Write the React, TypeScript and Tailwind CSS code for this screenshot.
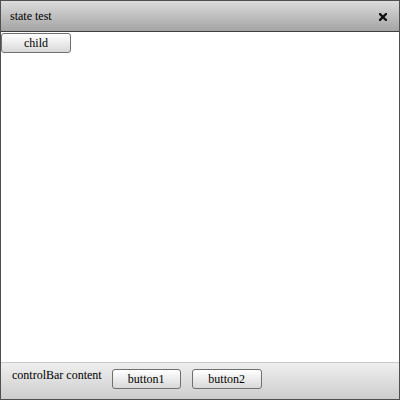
export default function App() {
  const serif = 'font-["Liberation_Serif",serif]';
  const btn =
    'h-[20px] rounded-[3px] border border-[#6f6f6f] bg-gradient-to-b from-[#ffffff] to-[#d9d9d9] text-[12px] leading-none text-black flex items-center justify-center ' +
    serif;

  return (
    <div className={'w-[400px] h-[400px] border border-[#4f4f4f] flex flex-col bg-white text-black ' + serif}>
      <div className="h-[31px] shrink-0 border-b border-[#3f3f3f] bg-gradient-to-b from-[#dcdcdc] to-[#a4a4a4] flex items-center justify-between pl-[9px] pr-[12px]">
        <span className={'text-[12px] leading-none ' + serif}>state test</span>
        <svg width="8" height="8" viewBox="0 0 8 8" className="mt-[1px]">
          <path d="M1 1L7 7M7 1L1 7" stroke="#111" strokeWidth="2.3" strokeLinecap="square" />
        </svg>
      </div>

      <div className="flex-1 pt-[1px]">
        <button className={btn + ' w-[70px]'}>child</button>
      </div>

      <div className="h-[37px] shrink-0 border-t border-[#c9c9c9] bg-gradient-to-b from-[#efefef] to-[#cdcdcd] flex items-start pl-[11px] pt-[6px] gap-[10px]">
        <span className={'text-[12px] leading-none ' + serif}>controlBar content</span>
        <div className="flex gap-[11px]">
          <button className={btn + ' w-[69px]'}>button1</button>
          <button className={btn + ' w-[70px]'}>button2</button>
        </div>
      </div>
    </div>
  );
}
